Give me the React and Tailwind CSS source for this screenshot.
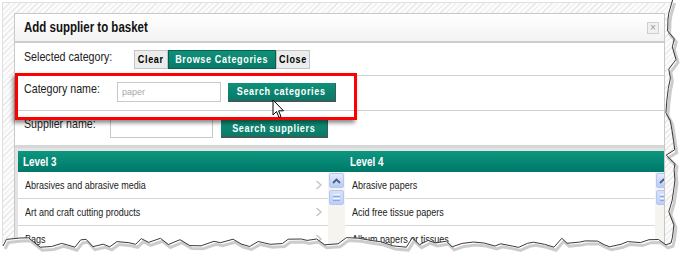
import React from "react";

const level3 = ["Abrasives and abrasive media", "Art and craft cutting products", "Bags"];
const level4 = ["Abrasive papers", "Acid free tissue papers", "Album papers or tissues"];

// the screenshot uses a narrow face; squeeze Liberation Sans to Arial Narrow proportions
function Narrow({ children, center }) {
  return (
    <span className={`block whitespace-nowrap scale-x-[0.82] ${center ? "origin-center" : "origin-left"}`}>
      {children}
    </span>
  );
}

// simple seeded jitter for the torn paper edge
function tornPoints() {
  let s = 11;
  const rnd = () => {
    s = (s * 9301 + 49297) % 233280;
    return s / 233280;
  };
  const right = [];
  for (let y = 0; y < 238; y += 5 + rnd() * 9) {
    right.push([671 + (rnd() - 0.5) * 11, y]);
  }
  right.push([671, 243]);
  const bottom = [];
  for (let x = 666; x > 4; x -= 5 + rnd() * 9) {
    bottom.push([x, 242.5 + (rnd() - 0.5) * 10]);
  }
  bottom.push([3, 246]);
  return [...right, ...bottom];
}

function TornEdge() {
  const pts = tornPoints();
  const line = pts.map((p, i) => `${i ? "L" : "M"}${p[0].toFixed(1)},${p[1].toFixed(1)}`).join(" ");
  return (
    <svg className="pointer-events-none absolute left-0 top-0" width="687" height="257">
      <path d={`M687,0 ${line.replace("M", "L")} L0,246 L0,257 L687,257 Z`} fill="#fff" />
      <path d={line} transform="translate(2,3)" fill="none" stroke="#000" strokeOpacity="0.2" strokeWidth="3" />
      <path d={line} fill="none" stroke="#3a3a3a" strokeWidth="1" />
    </svg>
  );
}

function Chevron() {
  return (
    <svg width="8" height="10" viewBox="0 0 8 10" className="shrink-0">
      <path d="M1.5 1 L6 5 L1.5 9" fill="none" stroke="#c4c4c4" strokeWidth="1.4" />
    </svg>
  );
}

function ScrollBar() {
  return (
    <div className="flex w-[17px] shrink-0 flex-col items-center gap-[2px] bg-[#f5f4ef] pt-[1px]">
      <div className="flex h-[15px] w-[15px] items-center justify-center rounded-[2px] border border-[#b5c7f2] bg-gradient-to-b from-[#e3ebfd] to-[#b9cbf6]">
        <svg width="9" height="6" viewBox="0 0 9 6">
          <path d="M1 5 L4.5 1.5 L8 5" fill="none" stroke="#4a5e86" strokeWidth="1.8" />
        </svg>
      </div>
      <div className="flex h-[15px] w-[15px] flex-col items-center justify-center gap-[1px] rounded-[2px] border border-[#b5c7f2] bg-gradient-to-b from-[#d6e2fc] to-[#bccdf7]">
        <div className="h-px w-[7px] bg-[#eef3fe]" />
        <div className="h-px w-[7px] bg-[#8ea6dc]" />
        <div className="h-px w-[7px] bg-[#eef3fe]" />
        <div className="h-px w-[7px] bg-[#8ea6dc]" />
      </div>
    </div>
  );
}

function Column({ title, items, chevrons }) {
  return (
    <div className="w-[327px] shrink-0">
      <div className="flex h-[21px] items-center bg-gradient-to-b from-[#0d977e] to-[#00786a] pl-[5px] text-[12px] font-bold text-white">
        <Narrow>{title}</Narrow>
      </div>
      <div className="flex bg-white">
        <div className="w-[310px]">
          {items.map((it) => (
            <div key={it} className="flex h-[27px] items-center justify-between border-b border-[#d7d7d7] pl-[7px] pr-[5px] text-[11px] text-[#222]">
              <Narrow>{it}</Narrow>
              {chevrons && <Chevron />}
            </div>
          ))}
        </div>
        <ScrollBar />
      </div>
    </div>
  );
}

const grayBtn = "flex h-[19px] items-center justify-center border border-[#c4c4c4] bg-[#ececec] text-[11px] font-bold tracking-[0.8px] text-black";
const greenBtn = "flex items-center justify-center bg-gradient-to-b from-[#0f9079] to-[#0a7a68] text-[11px] font-bold tracking-[0.8px] text-white";

export default function App() {
  return (
    <div className="relative h-[257px] w-[687px] overflow-hidden bg-white font-['Liberation_Sans',Arial,sans-serif] text-[#222]">
      <div className="ml-[2px] mt-[2px] h-[255px] w-[685px] border-l border-t border-[#e0e0e0] bg-[repeating-linear-gradient(135deg,#e9e9e9_0px,#e9e9e9_1px,#fbfbfb_1px,#fbfbfb_4px)] pl-[11px] pt-[10px]">
        <div className="h-[245px] w-[651px] overflow-hidden border border-[#c8c8c8] bg-white">
          {/* title */}
          <div className="flex h-[29px] items-center justify-between border-b-2 border-[#cdcdcd] bg-gradient-to-b from-white to-[#f3f3f3] pl-[9px] pr-[5px]">
            <span className="text-[14px] font-bold text-[#111]">
              <Narrow>Add supplier to basket</Narrow>
            </span>
            <div className="flex h-[12px] w-[12px] items-center justify-center border border-[#cfcfcf] bg-[#f0f0f0] text-[10px] leading-none text-[#999]">×</div>
          </div>

          {/* selected category */}
          <div className="flex h-[33px] border-b border-[#cfcfcf] pl-[9px]">
            <span className="mt-[6px] w-[110px] shrink-0 text-[13px] leading-[16px]">
              <Narrow>Selected category:</Narrow>
            </span>
            <div className="mt-[7px] flex">
              <button className={`${grayBtn} w-[34px]`}><Narrow center>Clear</Narrow></button>
              <button className={`${greenBtn} h-[19px] w-[108px] border border-[#06604f]`}><Narrow center>Browse Categories</Narrow></button>
              <button className={`${grayBtn} w-[34px]`}><Narrow center>Close</Narrow></button>
            </div>
          </div>

          {/* category name */}
          <div className="flex h-[35px] border-b border-[#cfcfcf] pl-[9px]">
            <span className="mt-[5px] w-[93px] shrink-0 text-[13px] leading-[16px]">
              <Narrow>Category name:</Narrow>
            </span>
            <input
              className="mt-[6px] h-[20px] w-[104px] border border-[#c9c9c9] bg-white pl-[4px] text-[9px] outline-none placeholder:text-[#a8a8a8]"
              placeholder="paper"
            />
            <button className={`${greenBtn} ml-[7px] mt-[7px] h-[19px] w-[108px] border-b-2 border-r border-[#3d5c57]`}>
              <Narrow center>Search categories</Narrow>
            </button>
          </div>

          {/* supplier name */}
          <div className="flex h-[37px] border-b-[3px] border-[#d8d8d8] pl-[9px]">
            <span className="mt-[5px] w-[86px] shrink-0 text-[13px] leading-[16px]">
              <Narrow>Supplier name:</Narrow>
            </span>
            <input className="mt-[7px] h-[20px] w-[103px] border border-[#c9c9c9] bg-white outline-none" />
            <button className={`${greenBtn} ml-[8px] mt-[9px] h-[18px] w-[107px] border-b-2 border-r border-[#3d5c57]`}>
              <Narrow center>Search suppliers</Narrow>
            </button>
          </div>

          {/* level lists */}
          <div className="flex bg-[#e3e3e3] pl-[3px] pt-[3px]">
            <Column title="Level 3" items={level3} chevrons />
            <Column title="Level 4" items={level4} />
          </div>
        </div>
      </div>

      {/* highlight box */}
      <div className="pointer-events-none absolute left-[15px] top-[73px] h-[47px] w-[342px] border-[3px] border-[#ff0000] shadow-[-2px_3px_4px_rgba(0,0,0,0.45)]" />

      {/* mouse cursor */}
      <svg className="pointer-events-none absolute left-[272px] top-[99px]" width="13" height="20" viewBox="0 0 13 20">
        <path d="M1 1 L1 16 L4.5 12.5 L7 18.5 L9 17.6 L6.6 11.8 L11.5 11.8 Z" fill="#fff" stroke="#000" strokeWidth="1" strokeLinejoin="miter" />
      </svg>

      <TornEdge />
    </div>
  );
}
